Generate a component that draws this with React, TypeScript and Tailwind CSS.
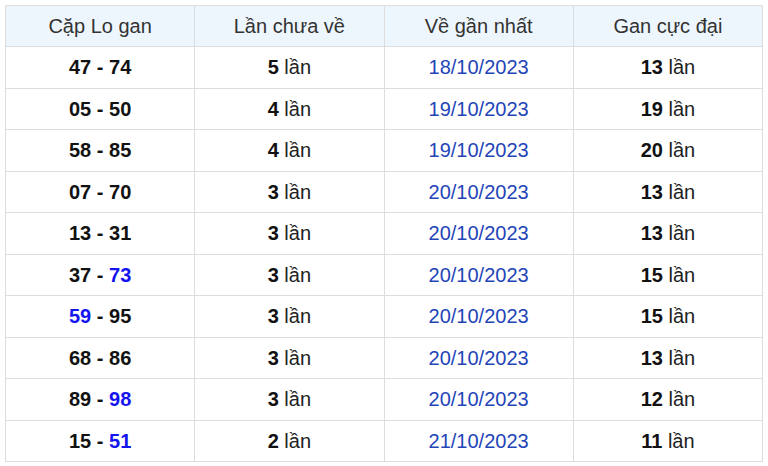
const rows: { a: string; b: string; hl?: "a" | "b"; times: number; date: string; max: number }[] = [
  { a: "47", b: "74", times: 5, date: "18/10/2023", max: 13 },
  { a: "05", b: "50", times: 4, date: "19/10/2023", max: 19 },
  { a: "58", b: "85", times: 4, date: "19/10/2023", max: 20 },
  { a: "07", b: "70", times: 3, date: "20/10/2023", max: 13 },
  { a: "13", b: "31", times: 3, date: "20/10/2023", max: 13 },
  { a: "37", b: "73", hl: "b", times: 3, date: "20/10/2023", max: 15 },
  { a: "59", b: "95", hl: "a", times: 3, date: "20/10/2023", max: 15 },
  { a: "68", b: "86", times: 3, date: "20/10/2023", max: 13 },
  { a: "89", b: "98", hl: "b", times: 3, date: "20/10/2023", max: 12 },
  { a: "15", b: "51", hl: "b", times: 2, date: "21/10/2023", max: 11 },
];

const headers = ["Cặp Lo gan", "Lần chưa về", "Về gần nhất", "Gan cực đại"];

export default function App() {
  return (
    <div className="min-h-screen bg-white pt-[5px] pl-[5px]" style={{ fontFamily: '"Liberation Sans", Arial, sans-serif' }}>
      <table className="w-[758px] table-fixed border-collapse text-[20px] text-[#222]">
        <thead>
          <tr className="bg-[#eef6fd]">
            {headers.map((h) => (
              <th key={h} className="h-[41px] border border-[#dddddd] p-0 text-center font-normal text-[#333]">
                {h}
              </th>
            ))}
          </tr>
        </thead>
        <tbody>
          {rows.map((r) => (
            <tr key={r.a + r.b}>
              <td className="h-[41.5px] border border-[#dddddd] p-0 text-center font-bold text-[#111]">
                <span className={r.hl === "a" ? "text-[#1414f0]" : ""}>{r.a}</span>
                {" - "}
                <span className={r.hl === "b" ? "text-[#1414f0]" : ""}>{r.b}</span>
              </td>
              <td className="border border-[#dddddd] p-0 text-center">
                <b className="text-[#111]">{r.times}</b> lần
              </td>
              <td className="border border-[#dddddd] p-0 text-center text-[#1f45b8]">{r.date}</td>
              <td className="border border-[#dddddd] p-0 text-center">
                <b className="text-[#111]">{r.max}</b> lần
              </td>
            </tr>
          ))}
        </tbody>
      </table>
    </div>
  );
}
